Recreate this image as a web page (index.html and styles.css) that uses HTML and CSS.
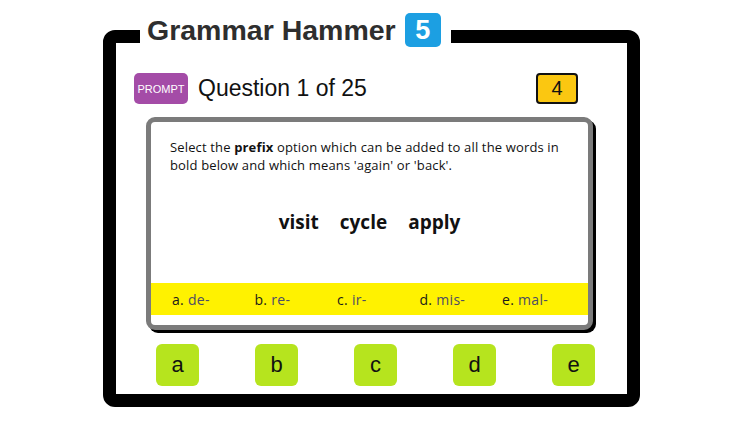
FILE: index.html
```html
<!DOCTYPE html>
<html>
<head>
<meta charset="utf-8">
<link rel="stylesheet" href="styles.css">
</head>
<body>
<div class="frame">
  <div class="title">Grammar Hammer <span class="level">5</span></div>
  <div class="header">
    <span class="prompt">PROMPT</span>
    <span class="qnum">Question 1 of 25</span>
    <span class="score">4</span>
  </div>
  <div class="card">
    <p class="instr">Select the <b>prefix</b> option which can be added to all the words in bold below and which means 'again' or 'back'.</p>
    <div class="words"><span>visit</span><span>cycle</span><span>apply</span></div>
    <div class="options">
      <span><i>a.</i> de-</span>
      <span><i>b.</i> re-</span>
      <span><i>c.</i> ir-</span>
      <span><i>d.</i> mis-</span>
      <span><i>e.</i> mal-</span>
    </div>
  </div>
  <div class="answers">
    <button class="ans">a</button>
    <button class="ans">b</button>
    <button class="ans">c</button>
    <button class="ans">d</button>
    <button class="ans">e</button>
  </div>
</div>
</body>
</html>
```

FILE: styles.css
```css
html, body {
  margin: 0;
  padding: 0;
  background: #fff;
}
body {
  padding: 30px 0 0 103px;
  font-family: "Liberation Sans", Arial, sans-serif;
}
.frame {
  position: relative;
  box-sizing: border-box;
  width: 537px;
  height: 377px;
  border: 13px solid #000;
  border-radius: 12px;
  display: flex;
  flex-direction: column;
}
.title {
  position: absolute;
  left: 24px;
  top: -30px;
  background: #fff;
  padding: 0 10px 0 7px;
  font-size: 28.5px;
  font-weight: bold;
  color: #2e2e2e;
  line-height: 34px;
  display: flex;
  align-items: center;
  gap: 9px;
  white-space: nowrap;
}
.level {
  display: inline-flex;
  align-items: center;
  justify-content: center;
  width: 36px;
  height: 34px;
  border-radius: 5px;
  background: #1c9fe2;
  color: #fff;
  font-size: 27px;
}
.header {
  display: flex;
  align-items: center;
  padding: 30px 0 0 18px;
  height: 31px;
}
.prompt {
  width: 54px;
  height: 31px;
  border-radius: 5px;
  background: #a44ca7;
  color: #fff;
  font-size: 11px;
  display: flex;
  align-items: center;
  justify-content: center;
}
.qnum {
  margin-left: 10px;
  font-size: 23px;
  color: #111;
}
.score {
  margin-left: auto;
  margin-right: 49px;
  box-sizing: border-box;
  width: 42px;
  height: 31px;
  border: 2px solid #111;
  border-radius: 4px;
  background: #fbc711;
  font-size: 20px;
  display: flex;
  align-items: center;
  justify-content: center;
  color: #111;
}
.card {
  margin: 13px 0 0 30px;
  box-sizing: border-box;
  width: 447px;
  height: 213px;
  border: 5px solid #7b7b7b;
  border-radius: 9px;
  box-shadow: 3px 3px 0 #000;
  background: #fff;
  display: flex;
  flex-direction: column;
  font-family: "Comic Sans MS", "Open Sans", sans-serif;
}
.instr {
  margin: 0;
  padding: 16px 19px 0 19px;
  font-size: 13px;
  line-height: 18px;
  color: #111;
  letter-spacing: 0.15px;
}
.instr b {
  font-weight: bold;
}
.words {
  display: flex;
  justify-content: center;
  gap: 21px;
  margin-top: 35px;
  font-size: 19px;
  font-weight: bold;
  color: #111;
}
.options {
  margin-top: auto;
  margin-bottom: 10px;
  height: 32px;
  background: #fff200;
  display: grid;
  grid-template-columns: repeat(5, 82.5px);
  align-items: center;
  padding-left: 21px;
  font-size: 14px;
  letter-spacing: 0.3px;
  color: #4c4c66;
}
.options i {
  font-style: normal;
  color: #1a1a1a;
}
.answers {
  display: flex;
  gap: 56px;
  margin: 14px 0 0 40px;
}
.ans {
  width: 43px;
  height: 42px;
  border: 0;
  padding: 0;
  border-radius: 6px;
  background: #b6e41e;
  font-family: "Liberation Sans", Arial, sans-serif;
  font-size: 22px;
  color: #111;
}
```
